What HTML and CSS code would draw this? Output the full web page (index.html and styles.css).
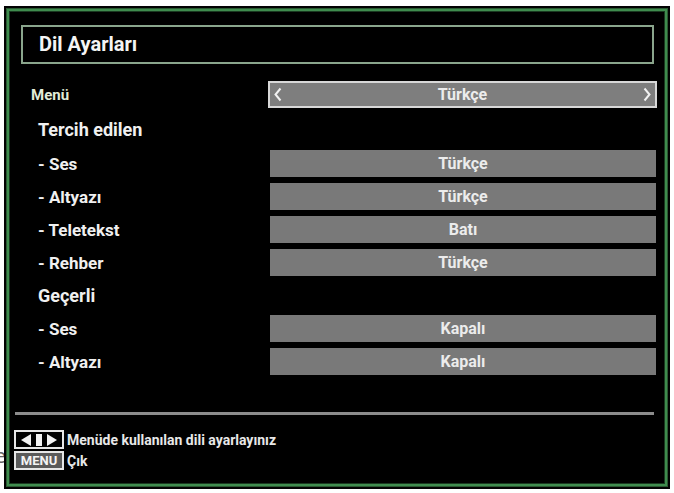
FILE: index.html
```html
<!DOCTYPE html>
<html lang="tr">
  <head>
    <meta charset="UTF-8" />
    <meta name="viewport" content="width=device-width, initial-scale=1.0" />
    <title>Dil Ayarları</title>
    <link rel="stylesheet" href="styles.css">
  </head>
  <body>
    <span class="stray">e</span>
    <div class="tv">
      <div class="frame">
        <div class="title-box">Dil Ayarları</div>

        <div class="rows">
          <div class="row">
            <div class="label label-menu">Menü</div>
            <div class="bar bar-select">
              <svg class="arrow" width="8" height="15" viewBox="0 0 8 15">
                <polyline points="6.5,1.5 1.5,7.5 6.5,13.5" fill="none" stroke="#f2f2f2" stroke-width="2" />
              </svg>
              <span class="value">Türkçe</span>
              <svg class="arrow" width="8" height="15" viewBox="0 0 8 15">
                <polyline points="1.5,1.5 6.5,7.5 1.5,13.5" fill="none" stroke="#f2f2f2" stroke-width="2" />
              </svg>
            </div>
          </div>

          <div class="row row-head">
            <div class="label label-head">Tercih edilen</div>
          </div>
          <div class="row">
            <div class="label">- Ses</div>
            <div class="bar">Türkçe</div>
          </div>
          <div class="row">
            <div class="label">- Altyazı</div>
            <div class="bar">Türkçe</div>
          </div>
          <div class="row">
            <div class="label">- Teletekst</div>
            <div class="bar">Batı</div>
          </div>
          <div class="row">
            <div class="label">- Rehber</div>
            <div class="bar">Türkçe</div>
          </div>

          <div class="row">
            <div class="label label-head">Geçerli</div>
          </div>
          <div class="row">
            <div class="label">- Ses</div>
            <div class="bar">Kapalı</div>
          </div>
          <div class="row">
            <div class="label">- Altyazı</div>
            <div class="bar">Kapalı</div>
          </div>
        </div>

        <div class="separator"></div>

        <div class="help">
          <div class="help-row">
            <span class="key key-arrows">
              <svg width="44" height="14" viewBox="0 0 44 14">
                <polygon points="4,7 14,1 14,13" fill="#f2f2f2" />
                <rect x="19" y="1" width="6" height="12" fill="#f2f2f2" />
                <polygon points="40,7 30,1 30,13" fill="#f2f2f2" />
              </svg>
            </span>
            <span class="help-text">Menüde kullanılan dili ayarlayınız</span>
          </div>
          <div class="help-row">
            <span class="key key-menu">MENU</span>
            <span class="help-text">Çık</span>
          </div>
        </div>
      </div>
    </div>
  </body>
</html>
```

FILE: styles.css
```css
* {
  margin: 0;
  padding: 0;
  box-sizing: border-box;
}

body {
  background: #ffffff;
  font-family: Roboto, "DejaVu Sans", sans-serif;
  font-weight: bold;
  color: #f0f0f0;
  position: relative;
  overflow: hidden;
}

.stray {
  position: absolute;
  left: -6px;
  top: 444px;
  font-family: "DejaVu Sans", sans-serif;
  font-weight: normal;
  font-size: 20px;
  color: #666;
}

.tv {
  position: relative;
  margin: 6px 4px 0 4px;
  width: 666px;
  height: 483px;
  background: #020202;
  padding: 3px;
}

.frame {
  height: 100%;
  border: 2px solid #3f8c4e;
  box-shadow: inset 0 0 0 1px #1a3a20, 0 0 0 1px #2a5a32;
  background: #000;
  padding: 14px 11px 0 12px;
}

.title-box {
  height: 39px;
  border: 2px solid #8aa58c;
  padding-left: 16px;
  font-size: 20px;
  line-height: 35px;
  color: #f4f4f4;
}

.rows {
  margin-top: 14px;
}

.row {
  display: flex;
  align-items: center;
  height: 33px;
}

.row-head {
  height: 36px;
}

.label {
  flex: 1;
  padding-left: 17px;
  font-size: 17px;
  color: #f0f0f0;
}

.label-menu {
  padding-left: 10px;
  font-size: 15px;
  color: #e2ecd8;
}

.label-head {
  font-size: 18px;
}

.bar {
  width: 386px;
  height: 27px;
  margin-right: -2px;
  background: #797979;
  color: #ececec;
  font-size: 16px;
  display: flex;
  align-items: center;
  justify-content: center;
}

.bar-select {
  width: 389px;
  height: 27px;
  margin-right: -3px;
  border: 2px solid #d8d8d8;
  background: #7e7e7e;
  justify-content: space-between;
  padding: 0 4px;
}

.arrow {
  display: block;
}

.separator {
  margin: 34px 0 0 -6px;
  height: 3px;
  background: #8c8c8c;
}

.help {
  margin-top: 15px;
  display: flex;
  flex-direction: column;
  gap: 2px;
}

.help-row {
  display: flex;
  align-items: center;
  gap: 3px;
  margin-left: -7px;
}

.key {
  width: 50px;
  height: 19px;
  border: 2px solid #e6e6e6;
  display: flex;
  align-items: center;
  justify-content: center;
}

.key-arrows {
  background: #000;
}

.key-menu {
  background: #5a5a5a;
  font-size: 13px;
  color: #f4f4f4;
}

.help-text {
  font-size: 14px;
  color: #e8e8e8;
}
```
